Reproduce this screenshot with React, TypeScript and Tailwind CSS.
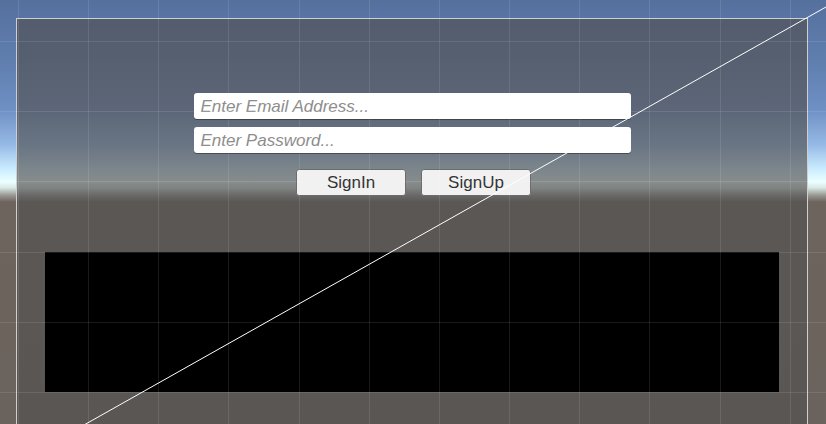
const GRID_X = Array.from({ length: 12 }, (_, i) => 17.8 + i * 70.18);
const GRID_Y = Array.from({ length: 6 }, (_, i) => 40.9 + i * 70.2);

function SceneOverlay() {
  return (
    <svg
      className="pointer-events-none absolute inset-0"
      width={826}
      height={424}
      viewBox="0 0 826 424"
    >
      {GRID_X.map((x) => (
        <line
          key={`x${x}`}
          x1={Math.round(x) + 0.5}
          y1={0}
          x2={Math.round(x) + 0.5}
          y2={424}
          stroke="rgba(255,255,255,0.1)"
          strokeWidth={1}
        />
      ))}
      {GRID_Y.map((y) => (
        <line
          key={`y${y}`}
          x1={0}
          y1={Math.round(y) + 0.5}
          x2={826}
          y2={Math.round(y) + 0.5}
          stroke="rgba(255,255,255,0.1)"
          strokeWidth={1}
        />
      ))}
      {/* canvas diagonal gizmo */}
      <line x1={16.5} y1={463} x2={1000} y2={-91} stroke="#ffffff" strokeWidth={1} />
    </svg>
  );
}

export default function App() {
  return (
    <div
      className="relative h-[424px] w-[826px] overflow-hidden bg-[linear-gradient(to_bottom,#56709e_0px,#5f7eae_60px,#6f90c4_110px,#96bae6_145px,#cdeeff_170px,#ecffff_182px,#d6e6e2_188px,#9a9a94_195px,#6e645e_202px,#6a625c_424px)] pt-[18px] pl-[16px]"
      style={{ fontFamily: '"Liberation Sans", Arial, sans-serif' }}
    >
      <div className="flex h-[445px] w-[792px] flex-col items-center border border-[#cfcfd2] bg-[rgba(82,81,80,0.66)] pt-[74px]">
        <div className="flex flex-col gap-[8px]">
          <div className="flex h-[26px] w-[437px] items-center rounded-[3px] bg-white pt-[2px] pl-[7px] text-[17px] italic text-[#8d8d8d] shadow-[0_1px_0_rgba(40,40,40,0.55)]">
            Enter Email Address...
          </div>
          <div className="flex h-[26px] w-[437px] items-center rounded-[3px] bg-white pt-[2px] pl-[7px] text-[17px] italic text-[#8d8d8d] shadow-[0_1px_0_rgba(40,40,40,0.55)]">
            Enter Password...
          </div>
        </div>
        <div className="mt-[16px] ml-[3px] flex gap-[15px]">
          <button
            type="button"
            className="flex h-[27px] w-[110px] items-center justify-center rounded-[3px] border border-[#6c6c6c] bg-[#f1f1f1] text-[17px] text-[#333333]"
          >
            SignIn
          </button>
          <button
            type="button"
            className="flex h-[27px] w-[110px] items-center justify-center rounded-[3px] border border-[#6c6c6c] bg-[#f1f1f1] text-[17px] text-[#333333]"
          >
            SignUp
          </button>
        </div>
        <div className="mt-[56px] h-[140px] w-[734px] bg-black" />
      </div>
      <SceneOverlay />
    </div>
  );
}
